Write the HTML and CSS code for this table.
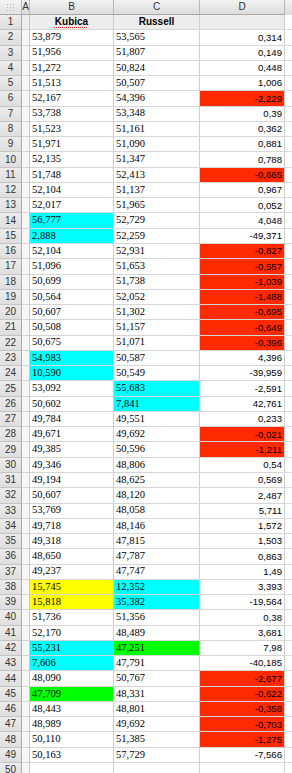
FILE: index.html
```html
<!DOCTYPE html>
<html>
<head>
<meta charset="utf-8">
<link rel="stylesheet" href="styles.css">
</head>
<body>
<div class="sheet">
  <div class="ch corner"><svg width="10" height="8" viewBox="0 0 10 8"><g fill="#b0b0b0"><rect x="1" y="1" width="1" height="1"/><rect x="4" y="1" width="1" height="1"/><rect x="7" y="1" width="1" height="1"/><rect x="1" y="4" width="1" height="1"/><rect x="4" y="4" width="1" height="1"/><rect x="7" y="4" width="1" height="1"/><rect x="1" y="7" width="1" height="1"/><rect x="4" y="7" width="1" height="1"/><rect x="7" y="7" width="1" height="1"/></g></svg></div>
  <div class="ch">A</div><div class="ch">B</div><div class="ch">C</div><div class="ch">D</div><div class="ch rest"></div>

  <div class="rn">1</div><div class="a r1"></div><div class="c r1 hd"><span class="sp">Kubica</span></div><div class="c r1 hd">Russell</div><div class="c r1"></div><div class="rest"></div>
  <div class="rn">2</div><div class="a"></div><div class="c v">53,879</div><div class="c v">53,565</div><div class="c d">0,314</div><div class="rest"></div>
  <div class="rn">3</div><div class="a"></div><div class="c v">51,956</div><div class="c v">51,807</div><div class="c d">0,149</div><div class="rest"></div>
  <div class="rn">4</div><div class="a"></div><div class="c v">51,272</div><div class="c v">50,824</div><div class="c d">0,448</div><div class="rest"></div>
  <div class="rn">5</div><div class="a"></div><div class="c v">51,513</div><div class="c v">50,507</div><div class="c d">1,006</div><div class="rest"></div>
  <div class="rn">6</div><div class="a"></div><div class="c v">52,167</div><div class="c v">54,396</div><div class="c d red">-2,229</div><div class="rest"></div>
  <div class="rn">7</div><div class="a"></div><div class="c v">53,738</div><div class="c v">53,348</div><div class="c d">0,39</div><div class="rest"></div>
  <div class="rn">8</div><div class="a"></div><div class="c v">51,523</div><div class="c v">51,161</div><div class="c d">0,362</div><div class="rest"></div>
  <div class="rn">9</div><div class="a"></div><div class="c v">51,971</div><div class="c v">51,090</div><div class="c d">0,881</div><div class="rest"></div>
  <div class="rn">10</div><div class="a"></div><div class="c v">52,135</div><div class="c v">51,347</div><div class="c d">0,788</div><div class="rest"></div>
  <div class="rn">11</div><div class="a"></div><div class="c v">51,748</div><div class="c v">52,413</div><div class="c d red">-0,665</div><div class="rest"></div>
  <div class="rn">12</div><div class="a"></div><div class="c v">52,104</div><div class="c v">51,137</div><div class="c d">0,967</div><div class="rest"></div>
  <div class="rn">13</div><div class="a"></div><div class="c v">52,017</div><div class="c v">51,965</div><div class="c d">0,052</div><div class="rest"></div>
  <div class="rn">14</div><div class="a"></div><div class="c v cyan">56,777</div><div class="c v">52,729</div><div class="c d">4,048</div><div class="rest"></div>
  <div class="rn">15</div><div class="a"></div><div class="c v cyan">2,888</div><div class="c v">52,259</div><div class="c d">-49,371</div><div class="rest"></div>
  <div class="rn">16</div><div class="a"></div><div class="c v">52,104</div><div class="c v">52,931</div><div class="c d red">-0,827</div><div class="rest"></div>
  <div class="rn">17</div><div class="a"></div><div class="c v">51,096</div><div class="c v">51,653</div><div class="c d red">-0,557</div><div class="rest"></div>
  <div class="rn">18</div><div class="a"></div><div class="c v">50,699</div><div class="c v">51,738</div><div class="c d red">-1,039</div><div class="rest"></div>
  <div class="rn">19</div><div class="a"></div><div class="c v">50,564</div><div class="c v">52,052</div><div class="c d red">-1,488</div><div class="rest"></div>
  <div class="rn">20</div><div class="a"></div><div class="c v">50,607</div><div class="c v">51,302</div><div class="c d red">-0,695</div><div class="rest"></div>
  <div class="rn">21</div><div class="a"></div><div class="c v">50,508</div><div class="c v">51,157</div><div class="c d red">-0,649</div><div class="rest"></div>
  <div class="rn">22</div><div class="a"></div><div class="c v">50,675</div><div class="c v">51,071</div><div class="c d red">-0,396</div><div class="rest"></div>
  <div class="rn">23</div><div class="a"></div><div class="c v cyan">54,983</div><div class="c v">50,587</div><div class="c d">4,396</div><div class="rest"></div>
  <div class="rn">24</div><div class="a"></div><div class="c v cyan">10,590</div><div class="c v">50,549</div><div class="c d">-39,959</div><div class="rest"></div>
  <div class="rn">25</div><div class="a"></div><div class="c v">53,092</div><div class="c v cyan">55,683</div><div class="c d">-2,591</div><div class="rest"></div>
  <div class="rn">26</div><div class="a"></div><div class="c v">50,602</div><div class="c v cyan">7,841</div><div class="c d">42,761</div><div class="rest"></div>
  <div class="rn">27</div><div class="a"></div><div class="c v">49,784</div><div class="c v">49,551</div><div class="c d">0,233</div><div class="rest"></div>
  <div class="rn">28</div><div class="a"></div><div class="c v">49,671</div><div class="c v">49,692</div><div class="c d red">-0,021</div><div class="rest"></div>
  <div class="rn">29</div><div class="a"></div><div class="c v">49,385</div><div class="c v">50,596</div><div class="c d red">-1,211</div><div class="rest"></div>
  <div class="rn">30</div><div class="a"></div><div class="c v">49,346</div><div class="c v">48,806</div><div class="c d">0,54</div><div class="rest"></div>
  <div class="rn">31</div><div class="a"></div><div class="c v">49,194</div><div class="c v">48,625</div><div class="c d">0,569</div><div class="rest"></div>
  <div class="rn">32</div><div class="a"></div><div class="c v">50,607</div><div class="c v">48,120</div><div class="c d">2,487</div><div class="rest"></div>
  <div class="rn">33</div><div class="a"></div><div class="c v">53,769</div><div class="c v">48,058</div><div class="c d">5,711</div><div class="rest"></div>
  <div class="rn">34</div><div class="a"></div><div class="c v">49,718</div><div class="c v">48,146</div><div class="c d">1,572</div><div class="rest"></div>
  <div class="rn">35</div><div class="a"></div><div class="c v">49,318</div><div class="c v">47,815</div><div class="c d">1,503</div><div class="rest"></div>
  <div class="rn">36</div><div class="a"></div><div class="c v">48,650</div><div class="c v">47,787</div><div class="c d">0,863</div><div class="rest"></div>
  <div class="rn">37</div><div class="a"></div><div class="c v">49,237</div><div class="c v">47,747</div><div class="c d">1,49</div><div class="rest"></div>
  <div class="rn">38</div><div class="a"></div><div class="c v yellow">15,745</div><div class="c v cyan">12,352</div><div class="c d">3,393</div><div class="rest"></div>
  <div class="rn">39</div><div class="a"></div><div class="c v yellow">15,818</div><div class="c v cyan">35,382</div><div class="c d">-19,564</div><div class="rest"></div>
  <div class="rn">40</div><div class="a"></div><div class="c v">51,736</div><div class="c v">51,356</div><div class="c d">0,38</div><div class="rest"></div>
  <div class="rn">41</div><div class="a"></div><div class="c v">52,170</div><div class="c v">48,489</div><div class="c d">3,681</div><div class="rest"></div>
  <div class="rn">42</div><div class="a"></div><div class="c v cyan">55,231</div><div class="c v green">47,251</div><div class="c d">7,98</div><div class="rest"></div>
  <div class="rn">43</div><div class="a"></div><div class="c v cyan">7,606</div><div class="c v">47,791</div><div class="c d">-40,185</div><div class="rest"></div>
  <div class="rn">44</div><div class="a"></div><div class="c v">48,090</div><div class="c v">50,767</div><div class="c d red">-2,677</div><div class="rest"></div>
  <div class="rn">45</div><div class="a"></div><div class="c v green">47,709</div><div class="c v">48,331</div><div class="c d red">-0,622</div><div class="rest"></div>
  <div class="rn">46</div><div class="a"></div><div class="c v">48,443</div><div class="c v">48,801</div><div class="c d red">-0,358</div><div class="rest"></div>
  <div class="rn">47</div><div class="a"></div><div class="c v">48,989</div><div class="c v">49,692</div><div class="c d red">-0,703</div><div class="rest"></div>
  <div class="rn">48</div><div class="a"></div><div class="c v">50,110</div><div class="c v">51,385</div><div class="c d red">-1,275</div><div class="rest"></div>
  <div class="rn">49</div><div class="a"></div><div class="c v">50,163</div><div class="c v">57,729</div><div class="c d">-7,566</div><div class="rest"></div>
  <div class="rn">50</div><div class="a"></div><div class="c"></div><div class="c"></div><div class="c"></div><div class="rest"></div>
</div>
</body>
</html>
```
FILE: styles.css
```css
html, body {
  margin: 0;
  padding: 0;
  background: #ffffff;
  overflow: hidden;
}
.sheet {
  display: grid;
  grid-template-columns: 22px 8px 84px 86px 85px 7px;
  grid-template-rows: 15px repeat(50, 15.27px);
  width: 292px;
}
.sheet > div {
  box-sizing: border-box;
  overflow: hidden;
  white-space: nowrap;
}
.ch {
  background: linear-gradient(#f3f3f3, #dcdcdc);
  border-right: 1px solid #b9b9b9;
  border-bottom: 1px solid #a9a9a9;
  font-family: "Liberation Sans", Arial, sans-serif;
  font-size: 10px;
  color: #333;
  display: flex;
  align-items: center;
  justify-content: center;
  line-height: 1;
}
.ch.corner {
  background: linear-gradient(#f3f3f3, #e2e2e2);
}
.ch.rest {
  border-right: none;
}
.rn {
  background: linear-gradient(#ececec, #dedede);
  border-right: 1px solid #a9a9a9;
  border-bottom: 1px solid #c4c4c4;
  font-family: "Liberation Sans", Arial, sans-serif;
  font-size: 10px;
  color: #333;
  display: flex;
  align-items: center;
  justify-content: center;
  line-height: 1;
}
.a {
  border-right: 1px solid #c8c8c8;
  border-bottom: 1px solid #d6d6d6;
  background: #f7f7f7;
}
.c {
  border-right: 1px solid #cfcfcf;
  border-bottom: 1px solid #d6d6d6;
  display: flex;
  align-items: center;
  line-height: 1;
  color: #000;
}
.rest {
  border-bottom: 1px solid #dcdcdc;
}
.r1 {
  background: #ededed;
}
.hd {
  justify-content: center;
  font-family: "Liberation Sans", Arial, sans-serif;
  font-weight: bold;
  font-size: 10px;
}
.sp {
  text-decoration: underline dotted #e02a2a;
  text-underline-offset: 2px;
}
.v {
  font-family: "Liberation Serif", "Times New Roman", serif;
  font-size: 10.5px;
  padding-left: 2px;
}
.d {
  font-family: "Liberation Sans", Arial, sans-serif;
  font-size: 9.6px;
  justify-content: flex-end;
  padding-right: 2px;
}
.cyan { background: #00ffff; }
.yellow { background: #ffff00; }
.green { background: #00ff00; }
.red { background: #ff2a00; }
```
